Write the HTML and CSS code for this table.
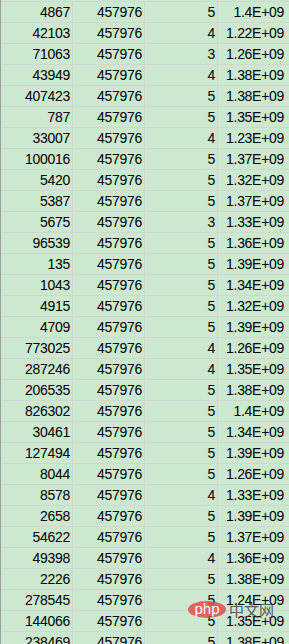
FILE: index.html
```html
<!DOCTYPE html>
<html>
<head>
<meta charset="utf-8">
<link rel="stylesheet" href="styles.css">
</head>
<body>
<div class="sheet">
  <div class="row"><span class="c">4867</span><span class="c">457976</span><span class="c">5</span><span class="c">1.4E+09</span></div>
  <div class="row"><span class="c">42103</span><span class="c">457976</span><span class="c">4</span><span class="c">1.22E+09</span></div>
  <div class="row"><span class="c">71063</span><span class="c">457976</span><span class="c">3</span><span class="c">1.26E+09</span></div>
  <div class="row"><span class="c">43949</span><span class="c">457976</span><span class="c">4</span><span class="c">1.38E+09</span></div>
  <div class="row"><span class="c">407423</span><span class="c">457976</span><span class="c">5</span><span class="c">1.38E+09</span></div>
  <div class="row"><span class="c">787</span><span class="c">457976</span><span class="c">5</span><span class="c">1.35E+09</span></div>
  <div class="row"><span class="c">33007</span><span class="c">457976</span><span class="c">4</span><span class="c">1.23E+09</span></div>
  <div class="row"><span class="c">100016</span><span class="c">457976</span><span class="c">5</span><span class="c">1.37E+09</span></div>
  <div class="row"><span class="c">5420</span><span class="c">457976</span><span class="c">5</span><span class="c">1.32E+09</span></div>
  <div class="row"><span class="c">5387</span><span class="c">457976</span><span class="c">5</span><span class="c">1.37E+09</span></div>
  <div class="row"><span class="c">5675</span><span class="c">457976</span><span class="c">3</span><span class="c">1.33E+09</span></div>
  <div class="row"><span class="c">96539</span><span class="c">457976</span><span class="c">5</span><span class="c">1.36E+09</span></div>
  <div class="row"><span class="c">135</span><span class="c">457976</span><span class="c">5</span><span class="c">1.39E+09</span></div>
  <div class="row"><span class="c">1043</span><span class="c">457976</span><span class="c">5</span><span class="c">1.34E+09</span></div>
  <div class="row"><span class="c">4915</span><span class="c">457976</span><span class="c">5</span><span class="c">1.32E+09</span></div>
  <div class="row"><span class="c">4709</span><span class="c">457976</span><span class="c">5</span><span class="c">1.39E+09</span></div>
  <div class="row"><span class="c">773025</span><span class="c">457976</span><span class="c">4</span><span class="c">1.26E+09</span></div>
  <div class="row"><span class="c">287246</span><span class="c">457976</span><span class="c">4</span><span class="c">1.35E+09</span></div>
  <div class="row"><span class="c">206535</span><span class="c">457976</span><span class="c">5</span><span class="c">1.38E+09</span></div>
  <div class="row"><span class="c">826302</span><span class="c">457976</span><span class="c">5</span><span class="c">1.4E+09</span></div>
  <div class="row"><span class="c">30461</span><span class="c">457976</span><span class="c">5</span><span class="c">1.34E+09</span></div>
  <div class="row"><span class="c">127494</span><span class="c">457976</span><span class="c">5</span><span class="c">1.39E+09</span></div>
  <div class="row"><span class="c">8044</span><span class="c">457976</span><span class="c">5</span><span class="c">1.26E+09</span></div>
  <div class="row"><span class="c">8578</span><span class="c">457976</span><span class="c">4</span><span class="c">1.33E+09</span></div>
  <div class="row"><span class="c">2658</span><span class="c">457976</span><span class="c">5</span><span class="c">1.39E+09</span></div>
  <div class="row"><span class="c">54622</span><span class="c">457976</span><span class="c">5</span><span class="c">1.37E+09</span></div>
  <div class="row"><span class="c">49398</span><span class="c">457976</span><span class="c">4</span><span class="c">1.36E+09</span></div>
  <div class="row"><span class="c">2226</span><span class="c">457976</span><span class="c">5</span><span class="c">1.38E+09</span></div>
  <div class="row"><span class="c">278545</span><span class="c">457976</span><span class="c">5</span><span class="c">1.24E+09</span></div>
  <div class="row"><span class="c">144066</span><span class="c">457976</span><span class="c">5</span><span class="c">1.35E+09</span></div>
  <div class="row"><span class="c">238469</span><span class="c">457976</span><span class="c">5</span><span class="c">1.38E+09</span></div>
</div>
<div class="watermark">
  <span class="wm-logo">php</span><span class="wm-text">中文网</span>
</div>
</body>
</html>
```
FILE: styles.css
```css
html, body {
  margin: 0;
  padding: 0;
  height: 644px;
  overflow: hidden;
  background: #cce8cf;
}
.sheet {
  padding-top: 1px;
  border-left: 1px solid #9c9c9c;
  font-family: "Liberation Sans", Arial, sans-serif;
  font-size: 14px;
  color: #000;
}
.row {
  display: grid;
  grid-template-columns: 72px 72px 73px 1fr;
  border-top: 1px solid #d2d6d2;
  height: 20px;
}
.c {
  display: block;
  height: 20px;
  line-height: 21px;
  text-align: right;
  padding-right: 2px;
  border-right: 1px solid #d2d6d2;
  white-space: nowrap;
  letter-spacing: -0.3px;
}
.row .c:last-child {
  border-right: none;
  padding-right: 5px;
}
.watermark {
  position: absolute;
  left: 188px;
  top: 601px;
  display: flex;
  align-items: center;
  gap: 3px;
  opacity: 0.85;
}
.wm-logo {
  display: block;
  width: 38px;
  height: 17px;
  border-radius: 50%;
  background: #e0504d;
  color: #fff;
  font-family: "Liberation Sans", Arial, sans-serif;
  font-size: 15px;
  line-height: 15px;
  text-align: center;
}
.wm-text {
  font-family: "Noto Sans CJK SC", sans-serif;
  font-size: 15px;
  line-height: 17px;
  color: #444;
}
```
